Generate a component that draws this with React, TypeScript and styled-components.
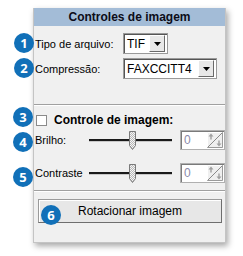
import * as React from "react";
import styled, { createGlobalStyle } from "styled-components";

const GlobalStyle = createGlobalStyle`
	html, body {
		margin: 0;
		padding: 0;
		background: #ffffff;
	}
	body {
		font-family: "Liberation Sans", Arial, sans-serif;
		font-size: 11px;
		color: #000;
	}
`;

const Stage = styled.div`
	position: relative;
	width: 243px;
	height: 256px;
	padding: 8px 0 0 33px;
	box-sizing: border-box;
	overflow: hidden;
`;

const Panel = styled.div`
	width: 193px;
	height: 235px;
	box-sizing: border-box;
	background: #f0f0f0;
	border-left: 1px solid #c4c4c4;
	border-right: 1px solid #c4c4c4;
	border-bottom: 1px solid #c4c4c4;
	box-shadow: 2px 3px 6px rgba(0, 0, 0, 0.35);
	display: flex;
	flex-direction: column;
`;

const Title = styled.div`
	height: 18px;
	background: #a3bcd7;
	font-weight: bold;
	font-size: 12px;
	line-height: 18px;
	text-align: center;
	color: #0c0c18;
`;

const Section = styled.div<{ $pad: string }>`
	display: flex;
	flex-direction: column;
	padding: ${(p) => p.$pad};
`;

const Row = styled.div<{ $h: number; $mt?: number }>`
	display: flex;
	align-items: center;
	height: ${(p) => p.$h}px;
	margin-top: ${(p) => p.$mt ?? 0}px;
`;

const Label = styled.span<{ $w: number }>`
	width: ${(p) => p.$w}px;
	flex: none;
	white-space: nowrap;
`;

const Separator = styled.div`
	height: 1px;
	background: #a0a0a0;
	border-bottom: 1px solid #ffffff;
`;

const SelectBox = styled.div<{ $w: number }>`
	width: ${(p) => p.$w}px;
	height: 21px;
	box-sizing: border-box;
	background: #fff;
	border: 1px solid #9a9a9a;
	box-shadow: inset 1px 1px 0 #555;
	display: flex;
	align-items: center;
	padding: 2px 2px 2px 3px;
`;

const SelectText = styled.span`
	flex: 1;
	font-size: 12px;
	color: #000;
`;

const DropButton = styled.div`
	width: 14px;
	height: 15px;
	background: #e8e8e8;
	border: 1px solid #fff;
	border-right-color: #6a6a6a;
	border-bottom-color: #6a6a6a;
	display: flex;
	align-items: center;
	justify-content: center;
`;

const Checkbox = styled.div`
	width: 11px;
	height: 11px;
	box-sizing: border-box;
	background: #fff;
	border: 1px solid #8a8a8a;
	margin: 0 7px 0 1px;
`;

const BoldLabel = styled.span`
	font-weight: bold;
	font-size: 12px;
`;

const Track = styled.div`
	position: relative;
	width: 83px;
	height: 20px;
	flex: none;
	display: flex;
	align-items: center;
`;

const TrackLine = styled.div`
	width: 100%;
	height: 2px;
	background: #1a1a1a;
	border-bottom: 1px solid #c8c8c8;
`;

const Thumb = styled.svg`
	position: absolute;
	left: 40px;
	top: 1px;
`;

const Spinner = styled.div`
	width: 46px;
	height: 20px;
	box-sizing: border-box;
	margin-left: 8px;
	background: #fff;
	border: 1px solid #b0b0b0;
	box-shadow: inset 1px 1px 0 #7a7a7a;
	display: flex;
	align-items: stretch;
`;

const SpinValue = styled.span`
	flex: 1;
	padding: 2px 0 0 3px;
	font-size: 12px;
	color: #8a8aa8;
`;

const SpinButtons = styled.svg`
	flex: none;
	margin: 1px 1px 1px 0;
`;

const ActionButton = styled.div`
	height: 24px;
	box-sizing: border-box;
	margin: 0 3px 0 4px;
	background: #e7e7e7;
	border: 1px solid #9a9a9a;
	border-bottom-color: #6e6e6e;
	border-right-color: #6e6e6e;
	box-shadow: inset 1px 1px 0 #fff;
	display: flex;
	align-items: center;
	justify-content: center;
	font-size: 12px;
`;

const Badge = styled.div<{ $x: number; $y: number }>`
	position: absolute;
	left: ${(p) => p.$x}px;
	top: ${(p) => p.$y}px;
	width: 20px;
	height: 20px;
	border-radius: 50%;
	background: #1170b8;
	color: #fff;
	font-family: "Open Sans", "Liberation Sans", sans-serif;
	font-weight: bold;
	font-size: 13px;
	line-height: 20px;
	text-align: center;
`;

function Arrow() {
	return (
		<svg width="7" height="4" viewBox="0 0 7 4">
			<path d="M0 0h7L3.5 4z" fill="#000" />
		</svg>
	);
}

function Slider() {
	return (
		<Track>
			<TrackLine />
			<Thumb width="7" height="19" viewBox="0 0 7 19">
				<defs>
					<pattern id="hatch" width="2" height="2" patternUnits="userSpaceOnUse">
						<rect width="2" height="2" fill="#f4f4f4" />
						<rect width="1" height="1" fill="#b8b8b8" />
						<rect x="1" y="1" width="1" height="1" fill="#b8b8b8" />
					</pattern>
				</defs>
				<path d="M0.5 0.5h6v14l-3 4l-3-4z" fill="url(#hatch)" stroke="#7a7a7a" />
			</Thumb>
		</Track>
	);
}

function Spin() {
	return (
		<Spinner>
			<SpinValue>0</SpinValue>
			<SpinButtons width="16" height="16" viewBox="0 0 16 16">
				<rect width="16" height="16" fill="#efefef" />
				<path d="M0 16L16 0" stroke="#8a8a8a" />
				<path d="M0.5 15.5V0.5H15.5" stroke="#fff" fill="none" />
				<path d="M0.5 15.5H15.5V0.5" stroke="#9a9a9a" fill="none" />
				<path d="M4 1.5l-2.5 3h5z M3.3 4.5h1.4v3h-1.4z" fill="#a0a0a0" />
				<path d="M12 14.5l-2.5-3h5z M11.3 8.5h1.4v3h-1.4z" fill="#a0a0a0" />
			</SpinButtons>
		</Spinner>
	);
}

export default function App() {
	return (
		<>
			<GlobalStyle />
			<Stage>
				<Panel>
					<Title>Controles de imagem</Title>
					<Section $pad="7px 0 25px 1px">
						<Row $h={21}>
							<Label $w={88}>Tipo de arquivo:</Label>
							<SelectBox $w={45}>
								<SelectText>TIF</SelectText>
								<DropButton>
									<Arrow />
								</DropButton>
							</SelectBox>
						</Row>
						<Row $h={21} $mt={4}>
							<Label $w={88}>Compressão:</Label>
							<SelectBox $w={94}>
								<SelectText>FAXCCITT4</SelectText>
								<DropButton>
									<Arrow />
								</DropButton>
							</SelectBox>
						</Row>
					</Section>
					<Separator />
					<Section $pad="5px 0 7px 1px">
						<Row $h={18}>
							<Checkbox />
							<BoldLabel>Controle de imagem:</BoldLabel>
						</Row>
						<Row $h={20} $mt={1}>
							<Label $w={54}>Brilho:</Label>
							<Slider />
							<Spin />
						</Row>
						<Row $h={20} $mt={13}>
							<Label $w={54}>Contraste</Label>
							<Slider />
							<Spin />
						</Row>
					</Section>
					<Separator />
					<Section $pad="7px 0 0 0">
						<ActionButton>Rotacionar imagem</ActionButton>
					</Section>
				</Panel>
				<Badge $x={14} $y={33}>1</Badge>
				<Badge $x={14} $y={58}>2</Badge>
				<Badge $x={13} $y={107}>3</Badge>
				<Badge $x={13} $y={132}>4</Badge>
				<Badge $x={13} $y={167}>5</Badge>
				<Badge $x={41} $y={205}>6</Badge>
			</Stage>
		</>
	);
}
